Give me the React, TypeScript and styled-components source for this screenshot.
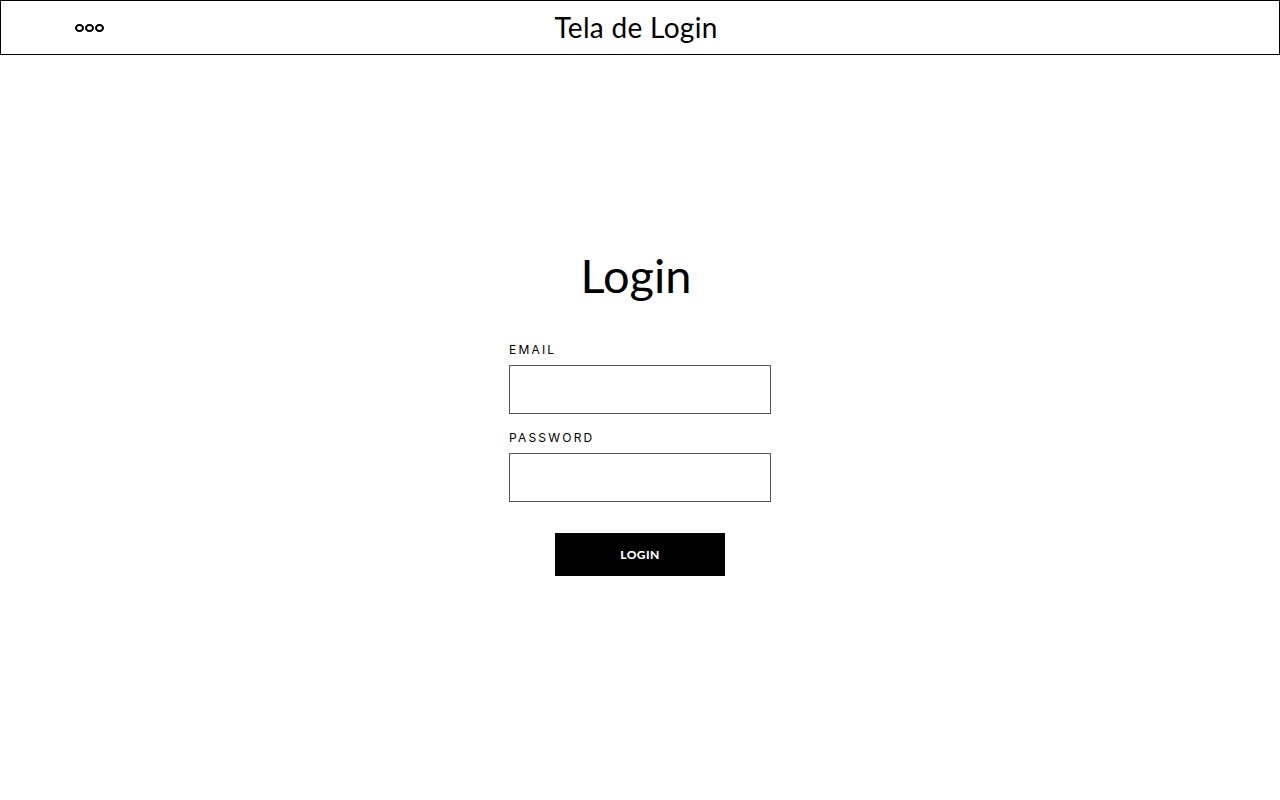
import React from "react";
import styled, { createGlobalStyle } from "styled-components";

const Global = createGlobalStyle`
  html, body { margin: 0; padding: 0; background: #fff; }
  body { font-family: "Lato", "Liberation Sans", sans-serif; color: #000; }
  * { box-sizing: border-box; }
`;

const Page = styled.div`
  width: 1280px;
  height: 800px;
  display: flex;
  flex-direction: column;
`;

const Header = styled.header`
  height: 55px;
  border: 1px solid #000;
  display: grid;
  grid-template-columns: 1fr auto 1fr;
  align-items: center;
`;

const Dots = styled.div`
  display: flex;
  gap: 1.5px;
  padding-left: 74px;
  padding-top: 1px;
`;

const Dot = styled.span`
  width: 8.5px;
  height: 8px;
  border: 2px solid #000;
  border-radius: 50%;
`;

const HeaderTitle = styled.h1`
  margin: 0 8px 2px 0;
  font-family: "Lato", sans-serif;
  font-weight: 400;
  font-size: 28px;
  letter-spacing: 0.3px;
`;

const Main = styled.main`
  flex: 1;
  display: flex;
  flex-direction: column;
  align-items: center;
  padding-top: 190px;
`;

const Title = styled.h2`
  margin: 0 8px 0 0;
  font-family: "Lato", sans-serif;
  font-weight: 400;
  font-size: 47px;
  line-height: 60px;
`;

const Form = styled.form`
  width: 262px;
  margin-top: 37px;
  display: flex;
  flex-direction: column;
`;

const Label = styled.label<{ $first?: boolean }>`
  font-family: "Inter", sans-serif;
  font-size: 12px;
  letter-spacing: 2.2px;
  line-height: 15px;
  margin-bottom: 8px;
  margin-top: ${(p) => (p.$first ? "0" : "16px")};
`;

const Input = styled.input`
  width: 262px;
  height: 49px;
  border: 1px solid #555;
  outline: none;
  background: #fff;
`;

const Button = styled.button`
  width: 170px;
  height: 43px;
  margin-top: 31px;
  align-self: center;
  background: #000;
  color: #fff;
  border: none;
  font-family: "Lato", sans-serif;
  font-weight: 900;
  font-size: 12px;
  letter-spacing: 0.4px;
`;

export default function App() {
  return (
    <>
      <Global />
      <Page>
        <Header>
          <Dots>
            <Dot />
            <Dot />
            <Dot />
          </Dots>
          <HeaderTitle>Tela de Login</HeaderTitle>
          <div />
        </Header>
        <Main>
          <Title>Login</Title>
          <Form onSubmit={(e) => e.preventDefault()}>
            <Label $first>EMAIL</Label>
            <Input type="email" />
            <Label>PASSWORD</Label>
            <Input type="password" />
            <Button type="submit">LOGIN</Button>
          </Form>
        </Main>
      </Page>
    </>
  );
}
